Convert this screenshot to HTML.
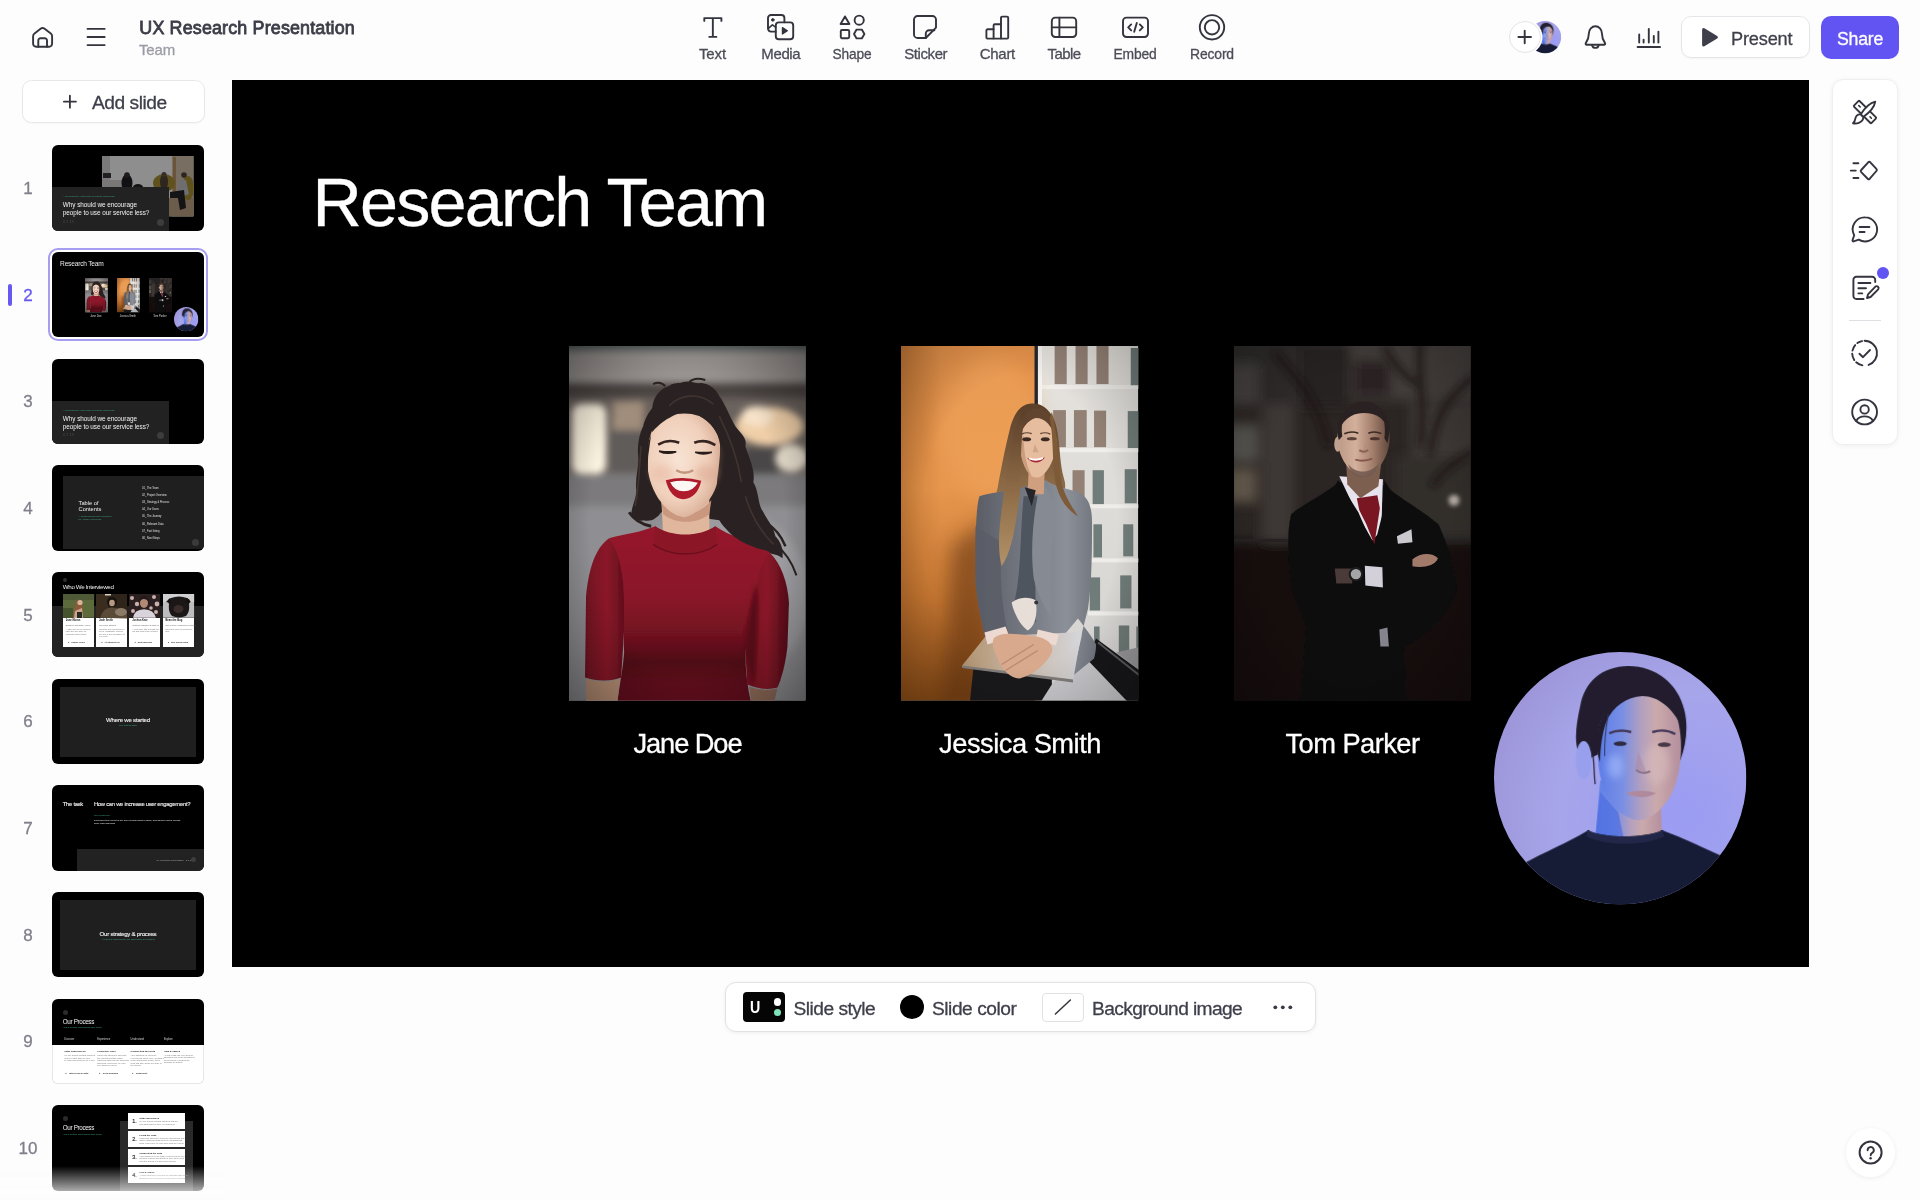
<!DOCTYPE html>
<html lang="en">
<head>
<meta charset="utf-8">
<title>UX Research Presentation</title>
<style>
*{box-sizing:border-box;margin:0;padding:0}
html,body{width:1920px;height:1200px;overflow:hidden;background:#fdfdfd}
body{font-family:"Liberation Sans",sans-serif;color:#3a3a46;position:relative;-webkit-font-smoothing:antialiased}
.a{position:absolute}
.t{position:absolute;white-space:nowrap;line-height:1;-webkit-text-stroke:.3px currentColor}
svg{position:absolute;overflow:visible}
.ic{fill:none;stroke:#34343f;stroke-width:1.9;stroke-linecap:round;stroke-linejoin:round}
.lbl{font-size:15px;color:#4c4c58;text-align:center;transform:translateX(-50%)}
.num{font-size:17px;color:#7f7f8c;width:40px;text-align:center}
.thumb{position:absolute;left:52px;width:152px;height:85.5px;border-radius:6px;background:#000;overflow:hidden}
.thumb .t{color:#fff;-webkit-text-stroke:0}
</style>
</head>
<body>
<div id="app" style="position:absolute;left:0;top:0;width:1920px;height:1200px;will-change:transform">
<!-- ===== top bar ===== -->
<header>
<svg class="ic" style="left:31px;top:26px" width="23" height="23" viewBox="0 0 23 23"><path d="M2.100 10.400 Q2.100 8.600 3.500 7.600 L9.900 2.600 Q11.600 1.300 13.300 2.600 L19.800 7.600 Q21.100 8.600 21.100 10.400 V17.800 a3 3 0 0 1 -3 3 H5.100 a3 3 0 0 1 -3 -3 Z"/><path d="M7.300 20.800 V14.400 a2.200 2.200 0 0 1 2.200 -2.200 h4.300 a2.200 2.200 0 0 1 2.200 2.200 V20.800"/></svg>
<svg class="ic" style="left:86px;top:27px" width="20" height="20" viewBox="0 0 20 20"><path d="M1.500 1.950 H18.700 M1.500 10 H18.700 M1.500 18.050 H18.700" stroke-width="1.800"/></svg>
<div class="t" style="left:139.3px;top:19.5px;font-size:17.9px;font-weight:400;letter-spacing:.16px;-webkit-text-stroke:.8px #3d3d49;color:#3d3d49">UX Research Presentation</div>
<div class="t" style="left:139px;top:42.4px;font-size:15px;letter-spacing:-.17px;color:#9c9ca6">Team</div>

<nav>
<!-- Text -->
<svg class="ic" style="left:702px;top:15px" width="22" height="24" viewBox="0 0 22 24"><path d="M2.3 5.9 V3.1 H19.4 V5.9 M10.85 3.1 V21.9 M7.3 21.9 H14.4"/></svg>
<div class="t lbl" style="left:712.5px;top:46px;letter-spacing:-.13px">Text</div>
<!-- Media -->
<svg class="ic" style="left:766px;top:13px" width="29" height="28" viewBox="0 0 29 28"><path d="M9.6 18.6 H5 a3 3 0 0 1 -3 -3 V5 a3 3 0 0 1 3 -3 H15.4 a3 3 0 0 1 3 3 V9.2"/><rect x="9.8" y="9.4" width="17.4" height="16.8" rx="3"/><path d="M16.4 14.6 L21.4 17.8 L16.4 21 Z" fill="#34343f" stroke-width="1.2"/><circle cx="6.8" cy="6.9" r="1.3" fill="#34343f" stroke-width="1"/><path d="M2.4 15.4 L6.4 11.8 L9.6 14.2" stroke-width="1.6"/></svg>
<div class="t lbl" style="left:780.8px;top:46px;letter-spacing:-.37px">Media</div>
<!-- Shape -->
<svg class="ic" style="left:839px;top:14px" width="27" height="26" viewBox="0 0 27 26"><path d="M6 2.4 L10.4 10 H1.6 Z"/><circle cx="20.2" cy="6.2" r="4.6"/><rect x="1.8" y="16" width="8.4" height="8.2" rx="1.2"/><path d="M17.6 15.6 H22.8 L25.4 20 L22.8 24.4 H17.6 L15 20 Z"/></svg>
<div class="t lbl" style="left:852.1px;top:46px;letter-spacing:-.2px;transform:translateX(-50%) scaleX(.915)">Shape</div>
<!-- Sticker -->
<svg class="ic" style="left:912px;top:14px" width="26" height="26" viewBox="0 0 26 26"><path d="M24 13.6 V5.6 a3.6 3.6 0 0 0 -3.6 -3.6 H5.6 a3.6 3.6 0 0 0 -3.6 3.6 V20.4 a3.6 3.6 0 0 0 3.6 3.6 H13.8 Z"/><path d="M13.8 24 V19.6 a3.4 3.4 0 0 1 3.4 -3.4 H22.4"/></svg>
<div class="t lbl" style="left:925.7px;top:46px;letter-spacing:-.4px">Sticker</div>
<!-- Chart -->
<svg class="ic" style="left:984px;top:14px" width="27" height="26" viewBox="0 0 27 26"><path d="M2.4 23.6 V16.4 a1.2 1.2 0 0 1 1.2 -1.2 H9.6 V11.4 a1.2 1.2 0 0 1 1.2 -1.2 H17 V3.8 a1.2 1.2 0 0 1 1.2 -1.2 H23 a1.2 1.2 0 0 1 1.2 1.2 V23.6 a1 1 0 0 1 -1 1 H3.4 a1 1 0 0 1 -1 -1 Z"/><path d="M9.6 15.2 V24.4 M17 10.2 V24.4"/></svg>
<div class="t lbl" style="left:997.4px;top:46px;letter-spacing:-.3px">Chart</div>
<!-- Table -->
<svg class="ic" style="left:1050px;top:15px" width="28" height="24" viewBox="0 0 28 24"><rect x="1.8" y="2.6" width="24.4" height="19.4" rx="3.4"/><path d="M1.8 12.4 H26.2 M9.4 2.6 V22"/></svg>
<div class="t lbl" style="left:1064px;top:46px;letter-spacing:-.55px">Table</div>
<!-- Embed -->
<svg class="ic" style="left:1121px;top:15px" width="29" height="24" viewBox="0 0 29 24"><rect x="2" y="2.6" width="25" height="19.4" rx="3.4"/><path d="M10.2 9.4 L7.2 12.4 L10.2 15.4 M18.8 9.4 L21.8 12.4 L18.8 15.4 M15.8 8 L13.2 16.8"/></svg>
<div class="t lbl" style="left:1135.4px;top:46px;letter-spacing:-.2px;transform:translateX(-50%) scaleX(.925)">Embed</div>
<!-- Record -->
<svg class="ic" style="left:1198px;top:13px" width="28" height="28" viewBox="0 0 28 28"><circle cx="14" cy="14.3" r="12.2"/><circle cx="14" cy="14.3" r="7.2"/></svg>
<div class="t lbl" style="left:1211.9px;top:46px;letter-spacing:-.2px;transform:translateX(-50%) scaleX(.93)">Record</div>
</nav>

<!-- avatars -->
<svg style="left:1529px;top:20.800px" width="32.200" height="32.200" viewBox="0 0 252 252"><use href="#av" width="252" height="252"/></svg>
<div class="a" style="left:1508.5px;top:21px;width:32px;height:32px;border-radius:50%;background:#fff;border:1px solid #e4e4e9;box-shadow:0 0 0 1.5px #fdfdfd"></div>
<svg class="ic" style="left:1517px;top:29px" width="16" height="16" viewBox="0 0 16 16"><path d="M1.4 8 H14 M7.7 1.7 V14.3"/></svg>
<!-- bell -->
<svg class="ic" style="left:1584px;top:24px" width="24" height="26" viewBox="0 0 24 26"><path d="M2.700 20.800 a1.100 1.100 0 0 1 -.9 -1.700 C3.800 16.200 4.900 13.400 4.900 9.200 a6.500 6.900 0 0 1 13 0 C17.900 13.400 19 16.200 21 19.100 a1.100 1.100 0 0 1 -.9 1.700 Z"/><path d="M8.200 21.400 a3.300 3.300 0 0 0 6.400 0"/></svg>
<!-- stats -->
<svg class="ic" style="left:1636px;top:27px" width="26" height="22" viewBox="0 0 26 22"><path d="M1.6 20 H24" stroke-width="2"/><path d="M3.2 7.4 V15.6 M7.6 12.6 V15.6 M12.8 2 V15.6 M17.8 9 V15.6 M22.4 4.6 V15.6"/></svg>
<!-- present -->
<div class="a" style="left:1681px;top:15.900px;width:129px;height:42.600px;border-radius:10px;background:#fff;border:1.300px solid #e6e6ea;box-shadow:0 1px 2px rgba(0,0,0,.04)"></div>
<svg style="left:1701px;top:27px" width="18" height="21" viewBox="0 0 18 21"><path d="M2.6 2.6 L15.4 10.3 L2.6 18 Z" fill="#3f3f4b" stroke="#3f3f4b" stroke-width="3" stroke-linejoin="round"/></svg>
<div class="t" style="left:1731px;top:29px;font-size:19.2px;letter-spacing:-.2px;transform-origin:0 50%;transform:scaleX(.948);color:#3f3f4b">Present</div>
<!-- share -->
<div class="a" style="left:1821px;top:16px;width:77.5px;height:42.6px;border-radius:10px;background:#6254f3"></div>
<div class="t" style="left:1836.6px;top:29px;font-size:19.2px;letter-spacing:-.3px;transform-origin:0 50%;transform:scaleX(.925);color:#fff">Share</div>
</header>
<!-- ===== shared artwork (vector portraits) ===== -->
<svg width="0" height="0" style="left:0;top:0" aria-hidden="true">
<defs>
<filter id="b1" filterUnits="userSpaceOnUse" x="-80" y="-80" width="420" height="520"><feGaussianBlur stdDeviation=".6"/></filter>
<filter id="b2" filterUnits="userSpaceOnUse" x="-80" y="-80" width="420" height="520"><feGaussianBlur stdDeviation="2"/></filter>
<filter id="b3" filterUnits="userSpaceOnUse" x="-80" y="-80" width="420" height="520"><feGaussianBlur stdDeviation="3.5"/></filter>
<filter id="b6" filterUnits="userSpaceOnUse" x="-80" y="-80" width="420" height="520"><feGaussianBlur stdDeviation="6"/></filter>
<filter id="b10" filterUnits="userSpaceOnUse" x="-80" y="-80" width="420" height="520"><feGaussianBlur stdDeviation="10"/></filter>
<radialGradient id="vig" cx="50%" cy="50%" r="75%"><stop offset="55%" stop-color="#000" stop-opacity="0"/><stop offset="100%" stop-color="#000" stop-opacity=".45"/></radialGradient>
<clipPath id="cp"><rect width="236" height="354"/></clipPath>
<clipPath id="cc"><circle cx="126" cy="126" r="126"/></clipPath>

<!-- Jane Doe -->
<linearGradient id="sw" x1="0" y1="0" x2="0" y2="1"><stop offset="0" stop-color="#96192c"/><stop offset=".4" stop-color="#8a1729"/><stop offset=".62" stop-color="#6e111f"/><stop offset=".76" stop-color="#4e0b15"/><stop offset=".88" stop-color="#5e0e1b"/><stop offset="1" stop-color="#63101d"/></linearGradient>
<linearGradient id="swa" x1="0" y1="0" x2="1" y2="0"><stop offset="0" stop-color="#741122"/><stop offset=".5" stop-color="#8a1729"/><stop offset="1" stop-color="#560c18"/></linearGradient>
<radialGradient id="skin1" cx="42%" cy="45%" r="65%"><stop offset="0" stop-color="#f8e3d4"/><stop offset=".6" stop-color="#f0d0bb"/><stop offset="1" stop-color="#d3a68e"/></radialGradient>
<symbol id="p1" viewBox="0 0 236 354" preserveAspectRatio="none">
<g clip-path="url(#cp)">
<rect width="236" height="354" fill="#8e8e92"/>
<g filter="url(#b3)">
<rect x="-20" y="-20" width="276" height="26" fill="#55605f"/>
<rect x="-20" y="5" width="276" height="32" fill="#9a9492"/>
<rect x="-20" y="36" width="276" height="18" fill="#4c4543"/>
<rect x="-20" y="52" width="276" height="80" fill="#6a625d"/>
<rect x="44" y="56" width="30" height="30" fill="#a08d7b"/>
<rect x="40" y="84" width="36" height="40" fill="#5f5b5a"/>
<rect x="176" y="102" width="34" height="26" fill="#484646"/>
<rect x="-20" y="128" width="276" height="36" fill="#7b7a7d"/>
<rect x="-20" y="160" width="276" height="210" fill="#8f8f93"/>
<ellipse cx="150" cy="250" rx="90" ry="90" fill="#9c9ca0"/>
</g>
<g filter="url(#b3)">
<rect x="3" y="58" width="34" height="70" rx="9" fill="#fbf3e0"/>
<ellipse cx="200" cy="80" rx="34" ry="19" fill="#f0cfa8"/>
<ellipse cx="222" cy="112" rx="16" ry="14" fill="#e3dac9"/>
<ellipse cx="188" cy="70" rx="16" ry="10" fill="#f6e2c8"/>
</g>
<g filter="url(#b1)">
<!-- hair mass -->
<path d="M83 62 C84 50 92 42 100 40 C104 36 110 38 114 36 C120 34 126 38 132 37 C140 38 146 42 150 50 C156 58 160 70 166 80 C172 88 178 92 176 100 C180 112 186 124 184 136 C190 146 188 158 194 166 C198 174 204 180 206 190 C212 196 214 204 213 212 C206 206 196 208 188 202 C178 200 168 194 160 186 C156 182 152 178 150 174 L92 166 C88 172 82 176 74 174 C70 176 66 172 62 170 C62 160 68 152 67 142 C66 130 70 122 69 110 C68 98 70 88 74 80 C76 72 80 66 83 62 Z" fill="#2b2221"/>
<path d="M204 196 C214 204 222 214 227 229" fill="none" stroke="#2b2221" stroke-width="2"/>
<path d="M196 176 C206 182 212 190 216 200" fill="none" stroke="#2b2221" stroke-width="2.500"/>
<path d="M60 166 C64 172 72 178 82 180" fill="none" stroke="#2b2221" stroke-width="3"/>
<path d="M96 40 C92 36 88 36 84 38 M120 36 C124 32 130 32 136 34" fill="none" stroke="#2b2221" stroke-width="2"/>
<!-- neck -->
<path d="M92 150 L94 190 L140 190 L140 150 Z" fill="#e0b69c"/>
<path d="M92 156 C104 172 128 172 142 154 L140 168 C128 178 106 178 94 168 Z" fill="#c9987e"/>
<!-- arms -->
<path d="M40 192 C26 202 20 222 17 250 L16 331 C28 335 42 335 52 331 L54 300 C56 270 58 240 60 214 Z" fill="url(#swa)"/>
<path d="M200 206 C212 218 218 236 219.500 256 L218 300 C216 318 212 332 208 341 C198 344 188 342 178 338 L176 306 C178 276 182 246 186 222 Z" fill="url(#swa)"/>
<!-- torso -->
<path d="M86 180 C72 186 54 188 40 192 C46 200 52 214 54 236 C56 262 54 286 55 306 C54 322 50 340 48 358 L182 358 C178 340 176 324 176 306 C180 280 184 252 190 226 C194 216 198 210 200 206 C184 196 160 190 146 180 C130 192 102 192 86 180 Z" fill="url(#sw)"/>
<path d="M86 180 C102 191 130 191 146 180 L148 198 C130 211 102 211 84 198 Z" fill="#8a1527"/>
<path d="M84 198 C102 211 130 211 148 198" fill="none" stroke="#6d1020" stroke-width="1.500"/>


<path d="M176 306 C178 280 182 256 186 236 C190 262 188 290 184 340 Z" fill="#3b060f" opacity=".6" filter="url(#b2)"/>
<!-- forearms -->
<path d="M17 332 C28 336 42 336 51 332 L48 358 L17 358 Z" fill="#b48d73"/>
<path d="M180 340 C190 344 200 344 208 342 L204 358 L182 358 Z" fill="#8d6a58"/>
<!-- face -->
<path d="M83 84 C90 72 100 66 110 66 C124 64 140 72 148 88 C152 98 152 110 151 120 C150 134 146 146 138 156 C130 164 122 170 115 171 C106 170 98 164 92 156 C84 146 79 132 78 118 C78 106 79 94 83 84 Z" fill="url(#skin1)"/>
<!-- hair front -->
<path d="M83 86 C82 70 92 52 112 50 C130 48 146 58 152 76 C154 84 154 92 152 98 C148 86 142 76 130 70 C122 67 114 67 108 68 C98 72 90 78 83 86 Z" fill="#2b2221"/>
<path d="M150 86 C160 104 162 130 168 154 C174 176 190 192 208 206 C190 204 172 198 160 186 C148 172 146 152 148 132 C150 118 152 104 150 86 Z" fill="#2b2221"/>
<path d="M82 88 C74 108 76 132 72 152 C70 162 66 168 64 170 C72 172 80 170 86 162 C80 148 78 128 79 110 Z" fill="#2b2221"/>
</g>
<!-- features -->
<ellipse cx="93" cy="127" rx="11" ry="9" fill="#e7b39e" opacity=".45" filter="url(#b3)"/><ellipse cx="137" cy="127" rx="11" ry="9" fill="#dca58f" opacity=".5" filter="url(#b3)"/><path d="M148 96 C152 110 150 130 142 150 C148 138 152 120 151 104 Z" fill="#c48f78" opacity=".6" filter="url(#b2)"/><path d="M89 98.500 Q99 92.500 110 96.500" fill="none" stroke="#35241f" stroke-width="2.600"/>
<path d="M125 96.500 Q136 92.500 146 99" fill="none" stroke="#35241f" stroke-width="2.600"/>
<path d="M90 105 Q98 109 107 105.500 Q98 106 90 105 Z" fill="#2a1c19" stroke="#2a1c19" stroke-width="1.600"/>
<path d="M126 106 Q134 109.500 142.500 106 Q134 106.500 126 106 Z" fill="#2a1c19" stroke="#2a1c19" stroke-width="1.600"/><path d="M100 60 C110 48 130 46 144 58 M150 70 C160 90 168 110 172 136 M176 150 C182 170 192 186 204 198 M72 100 C70 120 70 140 66 160" stroke="#4c3c38" stroke-width="1.600" fill="none" opacity=".7" filter="url(#b1)"/>
<path d="M107 124 Q115 129 124 124" fill="none" stroke="#c39680" stroke-width="2.400" filter="url(#b1)"/>
<path d="M96.500 134 Q114 129.500 132 134.500 Q128 152 114 153 Q101 152 96.500 134 Z" fill="#b01b2b"/>
<path d="M101 136 Q114 133 128.500 136.500 Q124 145 114.500 145 Q105 145 101 136 Z" fill="#fdf8f4"/>
<rect width="236" height="354" fill="url(#vig)"/>
</g>
</symbol>
<!-- Jessica Smith -->
<linearGradient id="wall" x1="0" y1="0" x2="0" y2="1"><stop offset="0" stop-color="#e4914a"/><stop offset=".4" stop-color="#e8974e"/><stop offset=".7" stop-color="#c97a35"/><stop offset="1" stop-color="#8a4d18"/></linearGradient>
<linearGradient id="wallL" x1="0" y1="0" x2="1" y2="0"><stop offset="0" stop-color="#8a4a12" stop-opacity=".32"/><stop offset=".3" stop-color="#8a4a12" stop-opacity="0"/></linearGradient>
<linearGradient id="bld" x1="0" y1="0" x2="0" y2="1"><stop offset="0" stop-color="#e6e3de"/><stop offset="1" stop-color="#d4d3d1"/></linearGradient>
<linearGradient id="jk" x1="0" y1="0" x2="1" y2="0"><stop offset="0" stop-color="#5a5d65"/><stop offset=".45" stop-color="#777b84"/><stop offset=".75" stop-color="#8c9099"/><stop offset="1" stop-color="#70747d"/></linearGradient>
<linearGradient id="hr" x1="0" y1="0" x2="0" y2="1"><stop offset="0" stop-color="#5b3f29"/><stop offset=".5" stop-color="#8c6a46"/><stop offset="1" stop-color="#b39268"/></linearGradient>
<linearGradient id="lap" x1="0" y1="0" x2="1" y2="0"><stop offset="0" stop-color="#b2936f"/><stop offset=".45" stop-color="#c4b3a2"/><stop offset="1" stop-color="#d6d6da"/></linearGradient>
<symbol id="p2" viewBox="0 0 236 354" preserveAspectRatio="none">
<g clip-path="url(#cp)">
<rect width="236" height="354" fill="url(#bld)"/>
<g filter="url(#b1)">
<g fill="#938175">
<rect x="152.800" y="-2" width="12" height="40"/><rect x="173.600" y="-2" width="12" height="40"/><rect x="194.400" y="-2" width="12" height="40"/>
<rect x="151.300" y="64" width="12.700" height="37"/><rect x="172" y="64" width="12.700" height="37"/><rect x="192" y="64.500" width="12" height="36.500"/>
<rect x="170.600" y="124" width="12" height="30"/>
</g>
<g fill="#6f7b79">
<rect x="228.500" y="2" width="10" height="38"/><rect x="225.500" y="65" width="12" height="37"/><rect x="190.600" y="124" width="11.200" height="34"/><rect x="222.500" y="123" width="12" height="34"/>
<rect x="191.400" y="178" width="8.500" height="33"/><rect x="221" y="178" width="10" height="32"/><rect x="187.700" y="231" width="10.300" height="33"/><rect x="218" y="229" width="11.200" height="33"/>
<rect x="192" y="280" width="5.500" height="28"/><rect x="216.600" y="279" width="10.400" height="29"/><rect x="234" y="280" width="4" height="28"/>
</g>
<g fill="#f4f2ee" opacity=".8"><rect x="140" y="39" width="100" height="4"/><rect x="150" y="102" width="90" height="4"/><rect x="184" y="158" width="56" height="4"/><rect x="186" y="212" width="54" height="4"/><rect x="186" y="265" width="54" height="4"/></g>
<path d="M214 306 L240 300 L240 326 Z" fill="#9a9a9c"/>
</g>
<rect x="0" y="0" width="133.500" height="354" fill="url(#wall)"/>
<rect x="0" y="0" width="133.500" height="354" fill="url(#wallL)"/>
<ellipse cx="88" cy="80" rx="50" ry="70" fill="#f2a860" opacity=".45" filter="url(#b10)"/>
<path d="M50 200 L90 170 L90 360 L40 360 Z" fill="#5a2f0e" opacity=".55" filter="url(#b10)"/>
<rect x="132.800" y="0" width="3.400" height="120" fill="#26262a"/>
<rect x="136.200" y="0" width="4" height="120" fill="#f3f2f0"/>
<!-- sill -->
<path d="M194 292 L240 326 L240 360 L180 360 L186 310 Z" fill="#17171a"/>
<path d="M196 296 L240 331" stroke="#5b5b5e" stroke-width="2" fill="none"/>
<path d="M128 360 L148 338 L186 314 L230 360 Z" fill="#c9c9cd" filter="url(#b1)"/>
<!-- skirt -->
<path d="M72 322 L150 326 L150 338 L136 360 L68 360 Z" fill="#19191c"/>
<g filter="url(#b1)">
<!-- hair back -->
<path d="M130.500 57.500 C118 58 112 68 108 84 C104 100 100 120 96 142 C92 160 88 176 88 192 C90 206 96 216 104 220 C112 214 120 196 124 176 L160 150 C164 144 164 138 162 132 C158 118 158 100 156 88 C154 70 144 57 130.500 57.500 Z" fill="url(#hr)"/>
<!-- jacket body -->
<path d="M118 142 C104 146 88 146 78 150 C74 162 74 200 74 236 C76 258 80 276 84 292 L106 284 L108 292 L150 292 L156 296 L176 272 C182 280 190 290 194 298 C194 304 193 308 192 312 L170 330 C176 306 180 290 180 286 L186 262 C190 236 190 200 190 176 C190 160 186 150 176 146 C164 142 152 140 144 134 Z" fill="url(#jk)"/>
<path d="M74 180 C74 210 74 240 78 262 C80 274 82 284 84 292 L106 284 C100 260 98 230 100 196 Z" fill="#595d67" opacity=".8"/>
<path d="M122 150 C118 190 120 230 112 258 L134 276 C134 240 132 190 136 150 Z" fill="#50545e"/>
<path d="M110 256 C112 266 118 278 126 284 C134 280 136 266 134 254 C128 250 118 250 110 256 Z" fill="#e7dfd7"/>
<path d="M140 134 C132 160 128 200 132 232 C136 250 144 262 150 272 C148 240 150 200 154 160 Z" fill="#868a93"/>
<circle cx="134.500" cy="256" r="2" fill="#33353d"/>
<!-- neck / face -->
<path d="M127 122 L126 148 L142 148 L143 122 Z" fill="#cf9f80"/>
<path d="M123 141 L130 160 L134 144 Z" fill="#26262b"/>
<path d="M117.500 92 C117 78 124 69 134 69 C146 69 154 78 154.500 92 C155 106 150 120 142 128 C138 132 134 132 130 130 C122 124 118 108 117.500 92 Z" fill="#e6bd9e"/>
<path d="M117.500 92 C118 108 122 124 130 130 C124 118 122 104 122 90 Z" fill="#c08f70" opacity=".7"/>
<path d="M116 96 C116 76 124 62 136 62 C148 64 154 78 155 94 C150 80 144 72 134 72 C126 74 120 82 116 96 Z" fill="#62452d"/>
<!-- hair front -->
<path d="M122 64 C112 78 108 106 104 136 C100 166 94 194 100 220 C110 206 114 180 118 150 C120 120 118 90 124 68 Z" fill="url(#hr)"/>
<path d="M150 66 C156 86 156 118 160 138 C164 152 170 160 176 170 C166 164 158 154 154 138 C150 118 152 92 148 72 Z" fill="#7d5a38"/>
<!-- laptop -->
<path d="M60.800 319 L84 290 L179.500 285.600 L171 335 L61 321 Z" fill="url(#lap)"/>
<path d="M60.800 319 L61 321.500 L171 336 L171 333 Z" fill="#807c7a"/>
<!-- cuffs + hands -->
<path d="M83 286 L104 280 L108 291 L86 298 Z" fill="#ecdad2"/>
<path d="M136 283 L157 288 L154 299 L134 294 Z" fill="#ecdad2"/>
<path d="M92 292 C100 284 118 288 134 290 C146 292 152 298 150 306 C144 318 132 328 118 332 C108 332 100 322 96 312 C92 304 90 298 92 292 Z" fill="#d8a98c"/>
<path d="M100 318 L132 298 M104 324 L136 304" stroke="#b98a70" stroke-width="1.200" fill="none"/>
</g>
<path d="M125 111.500 Q134 116 143.500 111 Q135 121.500 125 111.500 Z" fill="#a8283a"/>
<path d="M127.500 112.200 Q134 115 141 112" stroke="#fff" stroke-width="1.800" fill="none"/>
<g filter="url(#b1)"><ellipse cx="125" cy="93" rx="4.300" ry="2" fill="#3a2a22"/><ellipse cx="143.500" cy="93" rx="4.300" ry="2" fill="#3a2a22"/><path d="M133 98 L131 106 L137 106 Z" fill="#c79a7c" opacity=".7"/></g>
<path d="M120 88 q5 -2.500 10 -.5 M138.500 87.500 q5 -2 10 .500" stroke="#5a4030" stroke-width="1.200" fill="none"/>
<rect width="236" height="354" fill="url(#vig)" opacity=".6"/>
</g>
</symbol>

<!-- Tom Parker -->
<linearGradient id="tf" x1="0" y1="0" x2="1" y2="0"><stop offset="0" stop-color="#bd9884"/><stop offset=".35" stop-color="#d3b09c"/><stop offset=".68" stop-color="#a27d6b"/><stop offset="1" stop-color="#5f473c"/></linearGradient>
<symbol id="p3" viewBox="0 0 236 354" preserveAspectRatio="none">
<g clip-path="url(#cp)">
<rect width="236" height="354" fill="#2b2523"/>
<g filter="url(#b6)">
<rect x="-10" y="-10" width="120" height="70" fill="#2f2a29"/>
<rect x="28" y="58" width="32" height="140" fill="#3d3836"/>
<rect x="-8" y="18" width="32" height="40" fill="#454140"/>
<rect x="-8" y="78" width="32" height="38" fill="#55524f"/>
<rect x="-8" y="122" width="30" height="34" fill="#62594b"/>
<rect x="112" y="-10" width="140" height="64" fill="#423d3b"/>
<rect x="120" y="14" width="36" height="36" fill="#2a2423"/>
<rect x="176" y="56" width="70" height="60" fill="#3d3836"/>
<rect x="160" y="110" width="90" height="82" fill="#332e2c"/>
<rect x="66" y="0" width="50" height="60" fill="#262120"/>
<rect x="-10" y="196" width="256" height="170" fill="#141111"/>
</g>
<g stroke="#1e1918" fill="none" filter="url(#b3)" stroke-width="6" opacity=".85"><path d="M186 -5 C182 30 192 60 186 100"/><path d="M240 30 C214 50 200 70 196 108"/><path d="M240 104 C220 116 206 126 198 140"/><path d="M40 6 C66 36 86 60 94 100"/><path d="M150 0 C160 20 170 30 186 40"/></g>
<circle cx="219.500" cy="154" r="5.500" fill="#b1a9a1" filter="url(#b2)"/>
<rect x="-5" y="192.500" width="250" height="3" fill="#262020" filter="url(#b1)"/>
<g filter="url(#b1)">
<!-- suit -->
<path d="M104 136 C88 150 68 158 57 168 C52 188 54 220 58 244 C64 262 70 270 72 280 C70 306 68 330 66 360 L172 360 L170 300 C192 290 214 270 222 244 C222 224 212 196 204 178 C190 166 166 152 150 139 Z" fill="#0d0c10"/>
<path d="M60 218 C90 216 130 220 160 224 C190 224 206 218 218 232 C214 250 190 258 160 258 C120 258 80 256 64 248 Z" fill="#09080b"/>
<!-- shirt + tie -->
<path d="M105 130 L148.500 133 L147 184 L138 194 L122 166 Z" fill="#e7e3ec"/>
<path d="M122.500 152 L143 149 L145.500 162 L140 198 L132 178 L125 164 Z" fill="#7a1923"/>
<path d="M104 134 L124 166 L138 198 L118 202 L94 150 Z" fill="#0c0b0e"/>
<path d="M150 134 L147.500 170 L140 200 L162 198 L160 150 Z" fill="#0c0b0e"/>
<!-- head -->
<path d="M112 118 L113 138 L126 152 L144 140 L147 116 Z" fill="#7d5e50"/>
<path d="M129 58 C112 58 103 74 103 94 C105 112 114 126 128 130.500 C142 128 153 114 155 96 C157 76 146 58 129 58 Z" fill="url(#tf)"/>
<path d="M103 88 C102 70 112 56 129 55.500 C146 55.500 156 68 155 86 C151 74 144 67 129 67 C116 67 107 76 103 88 Z" fill="#2c2422"/>
<ellipse cx="103.500" cy="98" rx="3.500" ry="7.500" fill="#c0a08e"/>
<path d="M114 118 C122 128 136 128 146 116 C142 126 136 131 128 131 C122 131 116 126 114 118 Z" fill="#6f574d" opacity=".85"/>
<!-- pocket square, cuff, watch, hands -->
<path d="M162.500 190 L177 183 L178 196 L163.500 197.500 Z" fill="#cbc8ce"/>
<path d="M130.500 219.500 L148 221 L148.500 241 L131 239 Z" fill="#d3d0da"/>
<path d="M100.500 222 L118 222 L118 237 L102 237 Z" fill="#4b3b37"/>
<circle cx="121.600" cy="227.700" r="7.300" fill="#1d1d1f"/><circle cx="121.600" cy="227.700" r="5.200" fill="#a5a5a7"/>
<path d="M178 213 C186 206 198 206 203.500 212 C200 220 188 222 178 220 Z" fill="#a27a6a"/>
<path d="M145 283 L153 281 L154.500 300 L146 300 Z" fill="#85838b"/>
</g>
<g filter="url(#b1)"><ellipse cx="117.500" cy="92.500" rx="5" ry="1.700" fill="#5c4238"/><ellipse cx="140.500" cy="92.500" rx="5" ry="1.700" fill="#4d362e"/><path d="M110 87.500 q7 -3 14 -.5 M134 87 q7 -2.500 13 .500" stroke="#3a2a24" stroke-width="1.600" fill="none"/><path d="M103.500 74 C102.500 80 103 88 104.500 94 L108 90 C107 84 107.500 78 109 72 Z M154.500 74 C155.500 82 155 90 153 97 L150 92 C151 86 150.500 78 149 72 Z" fill="#2c2422"/><path d="M131 96 L128 108 L135 108 Z" fill="#b58d7c" opacity=".7"/></g>
<path d="M125 104 q4 3 9 0" stroke="#8b6355" stroke-width="2" fill="none" filter="url(#b1)"/>
<path d="M121 113.500 Q129 116 138 112.500" stroke="#85574c" stroke-width="1.800" fill="none"/>
<rect width="236" height="354" fill="url(#vig)" opacity=".6"/>
</g>
</symbol>

<!-- presenter avatar -->
<radialGradient id="avbg" cx="75%" cy="65%" r="85%"><stop offset="0" stop-color="#9a9cf3"/><stop offset=".6" stop-color="#a7a5ea"/><stop offset="1" stop-color="#9b93d6"/></radialGradient>
<linearGradient id="fc" x1="0" y1="0" x2="1" y2="0"><stop offset="0" stop-color="#5c7de9"/><stop offset=".3" stop-color="#7a90e4"/><stop offset=".52" stop-color="#b3a0c0"/><stop offset=".7" stop-color="#cbaaac"/><stop offset="1" stop-color="#b48f9e"/></linearGradient>
<symbol id="av" viewBox="0 0 252 252">
<g clip-path="url(#cc)">
<rect width="252" height="252" fill="url(#avbg)"/>
<g filter="url(#b1)">
<path d="M134 14 C108 14 90 30 86 54 C82 72 80 88 84 100 L96 106 L108 100 L186 108 C192 92 194 74 190 58 C184 32 162 14 134 14 Z" fill="#211f2e"/>
<path d="M99 104 C100 114 100 124 101 132" stroke="#2a2a44" stroke-width="1.300" fill="none"/>
<ellipse cx="89.500" cy="108" rx="8" ry="19" fill="#98a0ee"/>
<path d="M106 128 L101 188 L168 188 L166 140 Z" fill="url(#fc)"/>
<path d="M106 140 L101 186 L130 188 L124 160 Z" fill="#4d6de0" opacity=".7"/>
<path d="M148 38 C122 40 106 56 104 84 C102 112 106 136 118 152 C128 164 138 168 146 168 C158 166 170 156 178 140 C186 122 188 100 186 82 C184 56 170 38 148 38 Z" fill="url(#fc)"/>
<path d="M103 88 C105 56 122 37 148 37 C168 37 182 50 187 74 C178 56 164 44 148 44 C132 45 119 54 112 70 C108 82 106 96 106 110 C103 102 102 96 103 88 Z" fill="#211f2e"/><path d="M114 62 C111 80 110 92 110.500 104" stroke="#34365e" stroke-width="1" fill="none"/>
<ellipse cx="162" cy="112" rx="13" ry="20" fill="#dcc0c0" opacity=".5" filter="url(#b3)"/>
<ellipse cx="121" cy="114" rx="8" ry="12" fill="#a9c0ff" opacity=".55" filter="url(#b3)"/>
<path d="M28 212 C50 200 74 190 94 178 C110 186 150 186 168 178 C190 186 210 196 228 204 L250 260 L0 260 Z" fill="#181b35"/>
<path d="M94 178 C110 186 150 186 168 178 L170 184 C150 194 112 194 92 184 Z" fill="#232848"/>
</g>
<path d="M115 81 Q126 76.500 137 80 M158 80 Q170 76 181 82" stroke="#45395a" stroke-width="2.400" fill="none" filter="url(#b1)"/>
<g filter="url(#b1)"><ellipse cx="126" cy="91.500" rx="6.500" ry="2.300" fill="#2f2a40"/><ellipse cx="170" cy="92.500" rx="6.500" ry="2.300" fill="#4a3846"/><path d="M144 100 L141 118 L152 120 Z" fill="#a98aa4" opacity=".55"/></g>
<path d="M142 118 Q148 123 156 119" stroke="#8a6f88" stroke-width="2" fill="none"/>
<path d="M132 141 Q147 136 162 141 Q148 149 132 141 Z" fill="#b08a9c"/>
</g>
</symbol>
</defs>
</svg>
<!-- ===== main slide ===== -->
<main class="a" style="left:232px;top:80px;width:1577px;height:887px;background:#000;overflow:hidden">
<h1 class="t" style="left:80.400px;top:88px;font-size:68.300px;font-weight:400;color:#fff;letter-spacing:-1.780px">Research Team</h1>
<svg style="left:337.200px;top:266.200px" width="236.500" height="354.600"><use href="#p1" width="236.500" height="354.600"/></svg>
<svg style="left:669.300px;top:266.200px" width="237.300" height="354.600"><use href="#p2" width="237.300" height="354.600"/></svg>
<svg style="left:1002.200px;top:266.200px" width="236.600" height="354.600"><use href="#p3" width="236.600" height="354.600"/></svg>
<div class="t" style="left:455.500px;top:650px;transform:translateX(-50%);font-size:27.300px;color:#fff;letter-spacing:-1.100px">Jane Doe</div>
<div class="t" style="left:788px;top:650px;transform:translateX(-50%);font-size:27.300px;color:#fff;letter-spacing:-.500px">Jessica Smith</div>
<div class="t" style="left:1120.500px;top:650px;transform:translateX(-50%);font-size:27.300px;color:#fff;letter-spacing:-.550px">Tom Parker</div>
<svg style="left:1261.500px;top:571.700px" width="252.400" height="252.400"><use href="#av" width="252.400" height="252.400"/></svg>
</main>
<!-- ===== slide list ===== -->
<aside>
<div class="a" style="left:21.500px;top:79.800px;width:183.200px;height:42.800px;border-radius:9.500px;background:#fff;border:1.300px solid #e8e8eb;box-shadow:0 1px 2px rgba(0,0,0,.03)"></div>
<svg class="ic" style="left:62px;top:94px" width="15" height="15" viewBox="0 0 15 15"><path d="M1.900 7.700 H13.900 M7.900 1.700 V13.700" stroke-width="1.800"/></svg>
<div class="t" style="left:91.900px;top:92.600px;font-size:19.200px;letter-spacing:-.450px;color:#3f3f4b">Add slide</div>

<div class="t num" style="left:8px;top:180.00px">1</div>
<div class="t num" style="left:8px;top:286.67px;color:#6758f0">2</div>
<div class="t num" style="left:8px;top:393.33px">3</div>
<div class="t num" style="left:8px;top:500.00px">4</div>
<div class="t num" style="left:8px;top:606.67px">5</div>
<div class="t num" style="left:8px;top:713.33px">6</div>
<div class="t num" style="left:8px;top:820.00px">7</div>
<div class="t num" style="left:8px;top:926.67px">8</div>
<div class="t num" style="left:8px;top:1033.33px">9</div>
<div class="t num" style="left:8px;top:1140.00px">10</div>
<div class="a" style="left:8px;top:284px;width:4px;height:21.500px;border-radius:2px;background:#6758f0"></div>
<div class="a" style="left:48.200px;top:248.100px;width:159.600px;height:93.200px;border-radius:10px;border:2.700px solid #a69df1;background:#fff"></div>

<!-- 1 -->
<section class="thumb" style="top:145.20px">
<div class="a" style="left:0;top:0.05px;width:152px;height:85.5px">
<svg style="left:50px;top:10.700px" width="91.400" height="60.300" viewBox="0 0 91.400 60.300"><rect width="91.400" height="60.300" fill="#b6b6b8"/><rect x="0" y="0" width="8" height="34" fill="#9d9d9e"/><rect x="70" y="0" width="21.400" height="60.300" fill="#9a8d7e"/><rect x="71" y="1" width="3" height="40" fill="#8a6c48"/><rect x="62" y="42" width="29.400" height="18.300" fill="#8a7660"/><rect x="1" y="17" width="8" height="5" fill="#2a2a2c"/><rect x="0" y="24" width="30" height="10" fill="#9c9a98"/><ellipse cx="62" cy="27" rx="11" ry="9" fill="#7a6a24"/><ellipse cx="86" cy="32" rx="6" ry="12" fill="#7a6a24"/><ellipse cx="25" cy="27" rx="5.500" ry="9" fill="#17171b"/><circle cx="25" cy="19" r="2.800" fill="#2a2222"/><ellipse cx="62" cy="26" rx="4" ry="8" fill="#3a3228"/><circle cx="62" cy="18.500" r="2.500" fill="#4a3a34"/><path d="M76 24 l8 0 l3 14 l-10 4 Z" fill="#8e8e90"/><circle cx="82" cy="19" r="2.800" fill="#3a302c"/><path d="M68 36 l14 -2 l2 18 l-6 2 l-2 -12 l-8 0 Z" fill="#1a1a1e"/><ellipse cx="36" cy="31" rx="5" ry="3" fill="#1a1a1c"/><rect width="91.400" height="60.300" fill="#000" opacity=".22"/></svg>
<div class="a" style="left:0;top:42px;width:116.800px;height:43.500px;background:#222"></div>
<div class="t" style="left:10.800px;top:50.800px;font-size:2.450px;color:#3fa585;letter-spacing:.050px">A revolutionary approach to human happiness</div>
<div class="t" style="left:10.800px;top:56.200px;font-size:6.400px;line-height:8px;color:#f1f1f1;letter-spacing:-.050px">Why should we encourage<br>people to use our service less?</div>
<div class="t" style="left:10.800px;top:75.700px;font-size:3.600px;letter-spacing:.200px;color:#4d4d4d">3.7.19</div>
<div class="a" style="left:104.500px;top:73.500px;width:7px;height:7px;border-radius:50%;background:#3d3d3d"></div>
</div>
</section>

<!-- 2 (current) -->
<section class="thumb" style="top:251.87px">
<div class="a" style="left:0;top:0.13px;width:152px;height:85.5px">
<div class="t" style="left:8.100px;top:9.400px;font-size:6.600px;letter-spacing:-.200px;color:#e8e8e8">Research Team</div>
<svg style="left:32.500px;top:25.660px" width="22.800" height="34.180"><use href="#p1" width="22.800" height="34.180"/></svg>
<svg style="left:64.500px;top:25.660px" width="22.870" height="34.180"><use href="#p2" width="22.870" height="34.180"/></svg>
<svg style="left:96.600px;top:25.660px" width="22.800" height="34.180"><use href="#p3" width="22.800" height="34.180"/></svg>
<div class="t" style="left:43.900px;top:63.700px;transform:translateX(-50%);font-size:2.630px;color:#ddd">Jane Doe</div>
<div class="t" style="left:75.950px;top:63.700px;transform:translateX(-50%);font-size:2.630px;color:#ddd">Jessica Smith</div>
<div class="t" style="left:108px;top:63.700px;transform:translateX(-50%);font-size:2.630px;color:#ddd">Tom Parker</div>
<svg style="left:121.600px;top:55.100px" width="24.330" height="24.330"><use href="#av" width="24.330" height="24.330"/></svg>
</div>
</section>

<!-- 3 -->
<section class="thumb" style="top:358.53px">
<div class="a" style="left:0;top:0.22px;width:152px;height:85.5px">
<div class="a" style="left:0;top:42px;width:116.800px;height:43.500px;background:#222"></div>
<div class="t" style="left:10.800px;top:50.800px;font-size:2.450px;color:#3fa585;letter-spacing:.050px">A revolutionary approach to human happiness</div>
<div class="t" style="left:10.800px;top:56.200px;font-size:6.400px;line-height:8px;color:#f1f1f1;letter-spacing:-.050px">Why should we encourage<br>people to use our service less?</div>
<div class="t" style="left:10.800px;top:75.700px;font-size:3.600px;letter-spacing:.200px;color:#4d4d4d">3.7.19</div>
<div class="a" style="left:104.500px;top:73.500px;width:7px;height:7px;border-radius:50%;background:#3d3d3d"></div>
</div>
</section>

<!-- 4 -->
<section class="thumb" style="top:465.20px">
<div class="a" style="left:0;top:0.30px;width:152px;height:85.5px">
<div class="a" style="left:10.800px;top:10.300px;width:141.200px;height:73.500px;background:#1f1f1f"></div>
<div class="t" style="left:26.600px;top:34.300px;font-size:5.700px;line-height:6.600px;color:#f1f1f1">Table of<br>Contents</div>
<div class="t" style="left:26.600px;top:49.200px;font-size:2.350px;line-height:3.400px;color:#3fa585">A Comprehensive Development<br>for Human Happiness</div>
<div class="t" style="left:90px;top:19.300px;font-size:2.600px;line-height:7.160px;color:#e6e6e6">01_ The Team<br>02_ Project Overview<br>03_ Strategy &amp; Process<br>04_ Our Users<br>05_ The Journey<br>06_ Relevant Data<br>07_ Fact listing<br>08_ Next Steps</div>
<div class="a" style="left:139.500px;top:73.200px;width:7px;height:7px;border-radius:50%;background:#3a3a3a"></div>
</div>
</section>
<!-- 5 -->
<section class="thumb" style="top:571.87px">
<div class="a" style="left:0;top:0.38px;width:152px;height:85.5px">
<div class="a" style="left:0;top:33.500px;width:152px;height:52px;background:#222"></div>
<div class="a" style="left:11.400px;top:5.300px;width:4px;height:4px;border-radius:50%;background:#2e2e2e"></div>
<div class="t" style="left:10.800px;top:12.100px;font-size:6.200px;letter-spacing:-.350px;color:#f1f1f1">Who We Interviewed</div>
<div class="a" style="left:10.800px;top:45.400px;width:31.100px;height:29.700px;background:#fff"></div>
<div class="a" style="left:44px;top:45.400px;width:31.100px;height:29.700px;background:#fff"></div>
<div class="a" style="left:77.300px;top:45.400px;width:31.100px;height:29.700px;background:#fff"></div>
<div class="a" style="left:110.500px;top:45.400px;width:31.100px;height:29.700px;background:#fff"></div>
<svg style="left:10.800px;top:21.750px;filter:blur(.35px)" width="31.100" height="23.700" viewBox="0 0 31.100 23.700"><rect width="31.100" height="23.700" fill="#5c6a3c"/><rect y="0" width="31.100" height="6" fill="#4e5a36"/><rect x="0" y="14" width="10" height="10" fill="#46542e"/><path d="M13 8 q3 -5 6 0 l1 8 l-2 8 l-8 0 l1 -8 Z" fill="#8a5a3a"/><circle cx="17" cy="8.500" r="2.600" fill="#d8b49a"/><path d="M12 17 l7 -3 l1 10 l-9 0 Z" fill="#caa58c"/><path d="M14 18 l5 0 l0 6 l-5 0 Z" fill="#2a2a24"/></svg>
<svg style="left:44px;top:21.750px;filter:blur(.35px)" width="31.100" height="23.700" viewBox="0 0 31.100 23.700"><rect width="31.100" height="23.700" fill="#2e241a"/><rect x="0" y="0" width="12" height="23.700" fill="#3a2c1e"/><ellipse cx="16" cy="8" rx="5" ry="5" fill="#17130f"/><ellipse cx="16" cy="9" rx="2.800" ry="3.200" fill="#b89a84"/><path d="M4 23.700 q4 -12 14 -10 q10 2 13 6 l0 4.700 Z" fill="#5a4a38"/><ellipse cx="25" cy="18" rx="6" ry="4" fill="#8a7a66"/><rect x="9" y="0" width="6" height="1.500" fill="#d8d0c0"/></svg>
<svg style="left:77.300px;top:21.750px;filter:blur(.35px)" width="31.100" height="23.700" viewBox="0 0 31.100 23.700"><rect width="31.100" height="23.700" fill="#2b1f1f"/><g fill="#c9b0ac"><circle cx="3" cy="4" r="2"/><circle cx="8" cy="10" r="2.200"/><circle cx="25" cy="3" r="2"/><circle cx="28" cy="10" r="2.400"/><circle cx="22" cy="14" r="1.800"/><circle cx="4" cy="17" r="2"/><circle cx="27" cy="18" r="2"/></g><ellipse cx="15" cy="9" rx="4" ry="5" fill="#b08a74"/><path d="M10.500 8 q0 -6 4.500 -6 q5 0 5 6 q-2 -3 -5 -3 q-3 0 -4.500 3 Z" fill="#221a18"/><path d="M4 23.700 q1 -8 11 -8.500 q10 .5 12 8.500 Z" fill="#d9d4dc"/></svg>
<svg style="left:110.500px;top:21.750px;filter:blur(.35px)" width="31.100" height="23.700" viewBox="0 0 31.100 23.700"><rect width="31.100" height="23.700" fill="#bdbdbf"/><rect width="31.100" height="8" fill="#cfcfd1"/><path d="M6 10 q-3 -4 2 -6 q8 -3 16 0 q5 2 2 6 q1 8 -3 12 q-7 3 -14 0 q-4 -4 -3 -12 Z" fill="#1b1717"/><ellipse cx="15.500" cy="15" rx="5" ry="4" fill="#3a2c2a"/><path d="M3 8 l4 -4 l1 5 Z M28 8 l-4 -4 l-1 5 Z" fill="#141010"/></svg>
<div class="t" style="left:13.800px;top:48.200px;font-size:2.600px;font-weight:700;color:#222">Jane Moran</div>
<div class="t" style="left:13.800px;top:51.500px;font-size:2.150px;color:#666">Designer at Digital Agency</div>
<div class="t" style="left:13.800px;top:55.800px;font-size:2.150px;line-height:2.450px;color:#777">A high user of our product<br>uses the app daily for<br>business connections</div>
<div class="t" style="left:16px;top:68.700px;font-size:2.300px;font-weight:700;color:#333">&#9679;&nbsp;&nbsp; Urban Office</div>
<div class="t" style="left:47px;top:48.200px;font-size:2.600px;font-weight:700;color:#222">Jade Smith</div>
<div class="t" style="left:47px;top:51.500px;font-size:2.150px;color:#666">University student</div>
<div class="t" style="left:47px;top:55.800px;font-size:2.150px;line-height:2.450px;color:#777">Uses the app sometimes a<br>week. Constantly worried<br>the app is too accessible to<br>everyone</div>
<div class="t" style="left:49.200px;top:68.700px;font-size:2.300px;font-weight:700;color:#333">&#9679;&nbsp;&nbsp; At student life</div>
<div class="t" style="left:80.300px;top:48.200px;font-size:2.600px;font-weight:700;color:#222">Joshua Katz</div>
<div class="t" style="left:80.300px;top:51.500px;font-size:2.150px;color:#666">Content manager at start-up</div>
<div class="t" style="left:80.300px;top:55.800px;font-size:2.150px;line-height:2.450px;color:#777">A new user, still learning the<br>ins and outs of the product</div>
<div class="t" style="left:82.500px;top:68.700px;font-size:2.300px;font-weight:700;color:#333">&#9679;&nbsp;&nbsp; Entrepreneur</div>
<div class="t" style="left:113.500px;top:48.200px;font-size:2.600px;font-weight:700;color:#222">Bean the Bug</div>
<div class="t" style="left:113.500px;top:51.500px;font-size:2.150px;color:#666">Ruler of the Household, Retired</div>
<div class="t" style="left:113.500px;top:55.800px;font-size:2.150px;line-height:2.450px;color:#777">Does not enjoy being told to<br>stay</div>
<div class="t" style="left:115.700px;top:68.700px;font-size:2.300px;font-weight:700;color:#333">&#9679;&nbsp;&nbsp; Still sniffs often</div>
</div>
</section>

<!-- 6 -->
<section class="thumb" style="top:678.53px">
<div class="a" style="left:0;top:0.47px;width:152px;height:85.5px">
<div class="a" style="left:7.900px;top:7.600px;width:136.300px;height:70px;background:#1f1f1f"></div>
<div class="t" style="left:76px;top:38.100px;transform:translateX(-50%);font-size:6.100px;letter-spacing:-.250px;-webkit-text-stroke:.12px #f1f1f1;color:#f1f1f1">Where we started</div>
<div class="t" style="left:76px;top:45.100px;transform:translateX(-50%);font-size:2.350px;color:#3fa585">The original state</div>
</div>
</section>

<!-- 7 -->
<section class="thumb" style="top:785.20px">
<div class="a" style="left:0;top:0.55px;width:152px;height:85.5px">
<div class="a" style="left:25.200px;top:63.400px;width:126.800px;height:22.100px;background:#222"></div>
<div class="t" style="left:10.800px;top:16.500px;font-size:5.900px;letter-spacing:-.300px;-webkit-text-stroke:.12px #f1f1f1;color:#f1f1f1">The task</div>
<div class="t" style="left:41.900px;top:16.500px;font-size:5.900px;letter-spacing:-.290px;-webkit-text-stroke:.12px #f1f1f1;color:#f1f1f1">How can we increase user engagement?</div>
<div class="t" style="left:41.900px;top:28.200px;font-size:2.350px;color:#3fa585">The hypothesis</div>
<div class="t" style="left:41.900px;top:33.500px;font-size:2.450px;line-height:3.250px;color:#eee">Increased time spent in the app means happier users, and happier users means<br>more paid business</div>
<div class="t" style="left:104.400px;top:73.200px;font-size:2.350px;color:#aaa">UX Research presentation &middot; 3.7.19</div>
<div class="a" style="left:138.700px;top:71.600px;width:5px;height:5px;border-radius:50%;background:#3d3d3d"></div>
</div>
</section>

<!-- 8 -->
<section class="thumb" style="top:891.87px">
<div class="a" style="left:0;top:0.63px;width:152px;height:85.5px">
<div class="a" style="left:7.900px;top:7.600px;width:136.300px;height:70px;background:#1f1f1f"></div>
<div class="t" style="left:76px;top:38.200px;transform:translateX(-50%);font-size:6.100px;letter-spacing:-.250px;-webkit-text-stroke:.12px #f1f1f1;color:#f1f1f1">Our strategy &amp; process</div>
<div class="t" style="left:76px;top:45.100px;transform:translateX(-50%);font-size:2.350px;color:#3fa585">A tested &amp; proofread for our challenges &amp; questions</div>
</div>
</section>

<!-- 9 -->
<section class="thumb" style="top:998.53px;background:#fff;box-shadow:inset 0 0 0 .500px #cfcfcf">
<div class="a" style="left:0;top:0.72px;width:152px;height:85.5px">
<div class="a" style="left:0;top:-3px;width:152px;height:48.600px;background:#000"></div>
<div class="a" style="left:10.900px;top:10.300px;width:5px;height:5px;border-radius:50%;background:#2b2b2b"></div>
<div class="t" style="left:10.800px;top:19.400px;font-size:6.300px;letter-spacing:-.350px;color:#f1f1f1">Our Process</div>
<div class="t" style="left:10.800px;top:26.900px;font-size:2.350px;color:#3fa585">How a human-approached flow works</div>
<div class="t" style="left:12.300px;top:40.100px;font-size:2.600px;color:#d8d8d8">Discover</div>
<div class="t" style="left:45.200px;top:40.100px;font-size:2.600px;color:#d8d8d8">Experience</div>
<div class="t" style="left:78.600px;top:40.100px;font-size:2.600px;color:#d8d8d8">Understand</div>
<div class="t" style="left:111.900px;top:40.100px;font-size:2.600px;color:#d8d8d8">Explore</div>
<div class="t" style="left:12.300px;top:51.700px;font-size:2.500px;font-weight:700;color:#222">Total Time/Screen</div>
<div class="t" style="left:12.300px;top:55.100px;font-size:2.150px;line-height:2.400px;color:#777">We will access existing activities<br>and see what data we have<br>by observing what we do, &amp; why</div>
<div class="t" style="left:45.200px;top:51.700px;font-size:2.500px;font-weight:700;color:#222">Living the Labs</div>
<div class="t" style="left:45.200px;top:55.100px;font-size:2.150px;line-height:2.400px;color:#777">Using own attempt to duplicate<br>the interactions that matter,<br>gathering data from the moments<br>that bring experience, to learn<br>from what we can do</div>
<div class="t" style="left:78.600px;top:51.700px;font-size:2.500px;font-weight:700;color:#222">Connecting the Dots</div>
<div class="t" style="left:78.600px;top:55.100px;font-size:2.150px;line-height:2.400px;color:#777">After gathered up our team<br>experiences as the core, creating a<br>model that tracks all they act to<br>build and stay ahead of a sign of<br>the journey</div>
<div class="t" style="left:111.900px;top:51.700px;font-size:2.500px;font-weight:700;color:#222">How &amp; Tables</div>
<div class="t" style="left:111.900px;top:54.300px;font-size:2.150px;line-height:2.600px;color:#777">All that leads into even how we<br>assessed and create throughout<br>development in product the<br>solutions for details</div>
<div class="t" style="left:13.300px;top:72.600px;font-size:2.300px;font-weight:700;color:#333">&#9679;&nbsp;&nbsp;&nbsp; Interviews &amp; Data</div>
<div class="t" style="left:46.900px;top:72.600px;font-size:2.300px;font-weight:700;color:#333">&#9679;&nbsp;&nbsp;&nbsp; Deep analysis</div>
<div class="t" style="left:80px;top:72.600px;font-size:2.300px;font-weight:700;color:#333">&#9679;&nbsp;&nbsp;&nbsp; Data point</div>
</div>
</section>

<!-- 10 -->
<section class="thumb" style="top:1105.20px">
<div class="a" style="left:0;top:0.80px;width:152px;height:85.5px">
<div class="a" style="left:68.100px;top:15px;width:73.100px;height:71px;background:#2a2a2a"></div>
<div class="a" style="left:10.900px;top:10.300px;width:5px;height:5px;border-radius:50%;background:#2b2b2b"></div>
<div class="t" style="left:10.800px;top:19.200px;font-size:6.300px;letter-spacing:-.350px;color:#f1f1f1">Our Process</div>
<div class="t" style="left:10.800px;top:26.800px;font-size:2.350px;color:#3fa585">How a human-approached flow works</div>
<div class="a" style="left:76px;top:7.100px;width:57.300px;height:15.800px;background:#fff"></div>
<div class="a" style="left:76px;top:25.100px;width:57.300px;height:15.900px;background:#fff"></div>
<div class="a" style="left:76px;top:43px;width:57.300px;height:16px;background:#fff"></div>
<div class="a" style="left:76px;top:61.100px;width:57.300px;height:15.800px;background:#fff"></div>
<div class="t" style="left:80.200px;top:12.800px;font-size:5.400px;-webkit-text-stroke:.15px #222;color:#222">1.</div>
<div class="t" style="left:80.200px;top:30.800px;font-size:5.400px;-webkit-text-stroke:.15px #222;color:#222">2.</div>
<div class="t" style="left:80.200px;top:48.800px;font-size:5.400px;-webkit-text-stroke:.15px #222;color:#222">3.</div>
<div class="t" style="left:80.200px;top:66.600px;font-size:5.400px;-webkit-text-stroke:.15px #222;color:#222">4.</div>
<div class="t" style="left:87.300px;top:11.400px;font-size:2.350px;font-weight:700;color:#222">Total Time/Screen</div>
<div class="t" style="left:87.300px;top:14.200px;font-size:2.150px;line-height:2.700px;color:#777">We will access existing activities and see<br>and what data we have, by observing</div>
<div class="t" style="left:87.300px;top:28.100px;font-size:2.350px;font-weight:700;color:#222">Living the Labs</div>
<div class="t" style="left:87.300px;top:30.800px;font-size:2.150px;line-height:2.700px;color:#777">Using own attempt to duplicate interactions that<br>matter, gathering data from the moments that<br>bring experience, to learn from what we can do</div>
<div class="t" style="left:87.300px;top:46px;font-size:2.350px;font-weight:700;color:#222">Connecting the Dots</div>
<div class="t" style="left:87.300px;top:48.800px;font-size:2.150px;line-height:2.700px;color:#777">After gathered up our team experiences as core,<br>creating a model that tracks all they act to build<br>and stay ahead of a sign of the journey</div>
<div class="t" style="left:87.300px;top:65.300px;font-size:2.350px;font-weight:700;color:#222">How &amp; Tables</div>
<div class="t" style="left:87.300px;top:68.100px;font-size:2.150px;line-height:2.700px;color:#777">All that leads into even how we assessed and create<br>throughout development in product the solutions</div>
</div>
</section>
<div class="a" style="left:0;top:1166px;width:228px;height:34px;background:linear-gradient(to bottom,rgba(253,253,253,0),rgba(253,253,253,.92))"></div>
</aside>
<!-- ===== right tool rail ===== -->
<aside>
<div class="a" style="left:1831.700px;top:78.700px;width:66.300px;height:366px;border-radius:11px;background:#fff;border:1.300px solid #efeff1;box-shadow:0 1px 5px rgba(0,0,0,.06)"></div>
<!-- design -->
<svg class="ic" style="left:1851px;top:99px" width="27" height="27" viewBox="0 0 27 27"><path d="M3.200 6.400 L7.400 2.200 a1 1 0 0 1 1.400 0 L24.800 18.200 a1 1 0 0 1 0 1.400 L20.600 23.800 a1 1 0 0 1 -1.400 0 L3.200 7.800 a1 1 0 0 1 0 -1.400 Z" /><path d="M7.800 6.600 l1.400 1.400 M19 17.800 l1.400 1.400" stroke-width="1.600"/><path d="M24.200 2.600 C20 3.600 14 8.600 9.600 15.400 L12.200 18 C18.600 13.400 23.600 7.400 24.200 2.600 Z" fill="#fff"/><path d="M9.600 15.400 C6.400 15.200 4.600 17.600 4.200 20.200 C4 22 3 23.400 2 24.200 C6 25 10.400 23.600 11.800 20.600 C12.400 19.400 12.400 18.600 12.200 18 Z" fill="#fff"/></svg>
<!-- animation -->
<svg class="ic" style="left:1849px;top:160px" width="30" height="22" viewBox="0 0 30 22"><path d="M4.400 3.200 H9.400 M1.800 10.600 H6.800 M4.400 18 H9.400"/><path d="M19.800 2.300 a1.500 1.500 0 0 1 2.100 0 L28 8.900 a1.500 1.500 0 0 1 0 2.100 L21.400 18.700 a1.500 1.500 0 0 1 -2.100 0 L12.800 12.100 a1.500 1.500 0 0 1 0 -2.100 Z" transform="translate(-.6 0)"/></svg>
<!-- comment -->
<svg class="ic" style="left:1850px;top:215px" width="29" height="29" viewBox="0 0 29 29"><path d="M15.200 2.400 a12 12 0 1 1 -6.400 22.200 L3.600 26.400 a.9 .9 0 0 1 -1.100 -1.100 L4.200 20.200 A12 12 0 0 1 15.200 2.400 Z"/><path d="M9.600 12 H19.400 M9.600 17 H14.600"/></svg>
<!-- notes -->
<svg class="ic" style="left:1851px;top:274px" width="30" height="28" viewBox="0 0 30 28"><path d="M12.600 25 H5.400 a3 3 0 0 1 -3 -3 V5.800 a3 3 0 0 1 3 -3 H21.200 a3 3 0 0 1 3 3 V8"/><path d="M7.400 9 H19.400 M7.400 14.200 H15 M7.400 19.400 H11.200"/><path d="M24.400 12.600 a2 2 0 0 1 2.800 2.800 L19.600 23 L16 24 L17 20.400 Z"/></svg>
<div class="a" style="left:1876.500px;top:266.800px;width:12px;height:12px;border-radius:50%;background:#6254f3"></div>
<div class="a" style="left:1849px;top:320px;width:31.500px;height:1px;background:#dedee3"></div>
<!-- approval -->
<svg class="ic" style="left:1850px;top:339px" width="29" height="29" viewBox="0 0 29 29"><path d="M14.6 1.8 A12.400 12.400 0 0 1 18.6 25.940"/><path d="M12.400 26.400 A12.400 12.400 0 0 1 6.200 23.300 M4.300 21.100 A12.400 12.400 0 0 1 2.200 14.800 M2.500 11.600 A12.400 12.400 0 0 1 5.200 6.100 M7.400 4.100 A12.400 12.400 0 0 1 12 2.080"/><path d="M9.400 14.800 L13 18.200 L20 11"/></svg>
<!-- profile -->
<svg class="ic" style="left:1850px;top:398px" width="29" height="29" viewBox="0 0 29 29"><circle cx="14.600" cy="14" r="12.400"/><circle cx="14.600" cy="11.400" r="4.200"/><path d="M6.200 23 C8 19.600 11 18.400 14.600 18.400 C18.200 18.400 21.200 19.600 23 23"/></svg>
</aside>

<!-- ===== slide options bar ===== -->
<footer>
<div class="a" style="left:725.300px;top:981.700px;width:590.700px;height:50.600px;border-radius:11px;background:#fff;border:1.500px solid #e2e2e4;box-shadow:0 1px 4px rgba(0,0,0,.06)"></div>
<div class="a" style="left:742.700px;top:992.300px;width:42.400px;height:29.500px;border-radius:4px;background:#050505"></div>
<div class="t" style="left:750.300px;top:999.500px;font-size:15.800px;font-weight:700;-webkit-text-stroke:0;transform-origin:0 50%;transform:scaleX(.9);color:#fff">U</div>
<div class="a" style="left:773.700px;top:998px;width:7.600px;height:7.600px;border-radius:50%;background:#fff"></div>
<div class="a" style="left:773.700px;top:1008.700px;width:7.600px;height:7.600px;border-radius:50%;background:#7fe3b9"></div>
<div class="t" style="left:793.500px;top:998.600px;font-size:19.200px;letter-spacing:-.520px;color:#3f3f4b">Slide style</div>
<div class="a" style="left:900px;top:995px;width:24px;height:24px;border-radius:50%;background:#000"></div>
<div class="t" style="left:932px;top:998.600px;font-size:19.200px;letter-spacing:-.470px;color:#3f3f4b">Slide color</div>
<div class="a" style="left:1041.500px;top:992.500px;width:42px;height:29px;border-radius:4px;background:#fff;border:1px solid #e2e2e6"></div>
<svg class="ic" style="left:1052px;top:997px" width="22" height="20" viewBox="0 0 22 20"><path d="M3.400 17 L18.400 3" stroke-width="1.500"/></svg>
<div class="t" style="left:1092px;top:998.600px;font-size:19.200px;letter-spacing:-.620px;color:#3f3f4b">Background image</div>
<svg style="left:1272px;top:1004px" width="22" height="7" viewBox="0 0 22 7"><circle cx="3.300" cy="3.300" r="1.900" fill="#3a3a46"/><circle cx="10.800" cy="3.300" r="1.900" fill="#3a3a46"/><circle cx="18.300" cy="3.300" r="1.900" fill="#3a3a46"/></svg>
</footer>

<!-- help -->
<div class="a" style="left:1846px;top:1127.500px;width:49px;height:49px;border-radius:50%;background:#fff;box-shadow:0 1px 5px rgba(0,0,0,.07)"></div>
<svg class="ic" style="left:1858px;top:1139.500px" width="25" height="25" viewBox="0 0 25 25"><circle cx="12.600" cy="12.500" r="11" stroke-width="2"/><path d="M9.600 10.200 a3.100 3.100 0 1 1 4.600 2.700 c-1 .6 -1.500 1.200 -1.500 2.300" stroke-width="1.900"/><circle cx="12.600" cy="18.300" r="1.200" fill="#34343f" stroke="none"/></svg>
</div>
</body>
</html>
